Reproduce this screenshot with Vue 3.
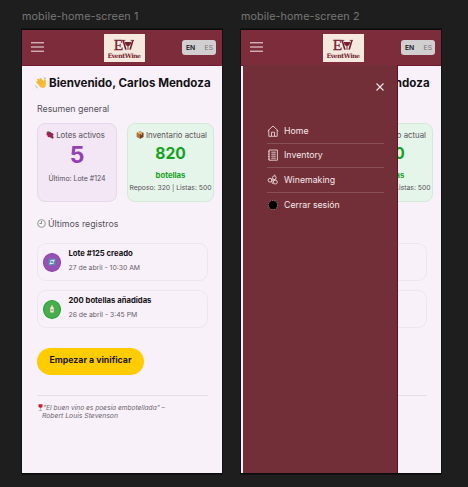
<script setup>
const screens = [
  { name: 'mobile-home-screen 1', menu: false },
  { name: 'mobile-home-screen 2', menu: true },
]
const records = [
  { title: 'Lote #125 creado', date: '27 de abril - 10:30 AM', kind: 'lot' },
  { title: '200 botellas añadidas', date: '26 de abril - 3:45 PM', kind: 'bottle' },
]
const links = [
  { label: 'Home', icon: 'home' },
  { label: 'Inventory', icon: 'list' },
  { label: 'Winemaking', icon: 'grape' },
  { label: 'Cerrar sesión', icon: 'dot' },
]
</script>

<template>
  <main class="board">
    <section v-for="s in screens" :key="s.name" class="frame">
      <div class="frame-name">{{ s.name }}</div>
      <div class="phone">
        <header class="bar">
          <svg class="burger" viewBox="0 0 13 10"><path d="M0 .8H13M0 5H13M0 9.2H13" stroke="#f6e9ec" stroke-width="1" /></svg>
          <div class="logo">
            <div class="mark">
              <span>E</span>
              <svg viewBox="0 0 13 12">
                <path d="M0 1H3.6M9.4 1H13" stroke="#741f2f" stroke-width=".9" />
                <path d="M1.2 1L4.2 11M11.8 1L8.8 11" stroke="#741f2f" stroke-width="1.8" fill="none" />
                <path d="M3.2 2.8H9.8Q9.8 6.7 7 7.1V10.2L8 11H5L6 10.2V7.1Q3.2 6.7 3.2 2.8Z" fill="#741f2f" />
              </svg>
            </div>
            <div class="brand">EventWine</div>
          </div>
          <div class="lang"><b>EN</b><span>ES</span></div>
        </header>

        <div class="content">
          <h1>
            <svg class="wave" viewBox="0 0 12 12">
              <g stroke="#f5b82e" stroke-width="1.9" stroke-linecap="round">
                <path d="M2.2 5L6 9M3 2.7L7.5 7.5M5.3 1.9L9 6M9.8 3.2L9.7 7" />
              </g>
              <path d="M4 6.5L8.5 4.2L10.6 5.5Q11.5 10.5 8 11Q5.8 11 4 8.5Z" fill="#f8bd34" />
              <path d="M3.1 4.1L5.8 7M4.5 2.7L7.3 5.6" stroke="#d28a20" stroke-width=".45" />
              <path d="M.5 8.5Q1 10.5 2.8 11M8.8.6Q10.4.8 10.9 2" stroke="#8b8793" stroke-width=".6" fill="none" />
            </svg>
            <span>Bienvenido, Carlos Mendoza</span>
          </h1>
          <h2 class="summary">Resumen general</h2>
          <div class="cards">
            <article class="card lots">
              <p class="label">
                <svg viewBox="0 0 9 9">
                  <path d="M.5 1Q4-1 5.4 2.2L2 3.5Z" fill="#45733a" />
                  <g fill="#9b2355"><circle cx="2.2" cy="3.4" r="1.7" /><circle cx="4.6" cy="2.8" r="1.7" /><circle cx="6.7" cy="4" r="1.7" /><circle cx="3.5" cy="5.3" r="1.8" /><circle cx="6" cy="6" r="1.8" /><circle cx="7.3" cy="7.3" r="1.3" /></g>
                </svg>
                <span>Lotes activos</span>
              </p>
              <strong>5</strong>
              <small>Último: Lote #124</small>
            </article>
            <article class="card stock">
              <p class="label">
                <svg viewBox="0 0 9 9">
                  <path d="M.7 2L4.5.4L8.3 2V6.8L4.5 8.7L.7 6.8Z" fill="#ad713d" />
                  <path d="M.7 2L4.5 3.7L8.3 2L4.5.4Z" fill="#d9a366" />
                  <path d="M4.5 3.7V8.7L8.3 6.8V2Z" fill="#75431f" />
                  <path d="M2.3 1.3L6.2 3V4.6" stroke="#f0cf98" stroke-width=".8" fill="none" />
                </svg>
                <span>Inventario actual</span>
              </p>
              <strong>820</strong>
              <em>botellas</em>
              <small>Reposo: 320 | Listas: 500</small>
            </article>
          </div>
          <h2 class="latest">
            <svg viewBox="0 0 10 10"><circle cx="5" cy="5" r="4.2" fill="#f5f5f4" stroke="#a09fa3" stroke-width="1.2" /><path d="M5 2.2V5H2.8" stroke="#4c4b50" stroke-width=".7" fill="none" /></svg>
            <span>Últimos registros</span>
          </h2>
          <article v-for="r in records" :key="r.title" class="record">
            <div class="badge" :class="r.kind">
              <svg v-if="r.kind === 'lot'" viewBox="0 0 8 8"><rect x=".5" y=".5" width="7" height="7" rx="1" fill="#548eae" /><path d="M2 3.2Q4 1.2 6 3M6 4.8Q4 6.6 2 5M6 1.5V3.2H4.5M2 6.4V4.9H3.5" stroke="#fff" stroke-width=".8" fill="none" /></svg>
              <svg v-else viewBox="0 0 8 8"><path d="M3.2.4H4.8V1.7L5.7 2.6V7.4H2.3V2.6L3.2 1.7Z" fill="#f5e9d7" /><path d="M3.2.4H4.8V1.5H3.2Z" fill="#d8b46b" /><path d="M3.1 4.1H4.9V6H3.1Z" fill="#d9a198" /></svg>
            </div>
            <div class="record-text">
              <b>{{ r.title }}</b>
              <span>{{ r.date }}</span>
            </div>
          </article>
          <button type="button">Empezar a vinificar</button>
          <footer>
            <svg viewBox="0 0 5 7"><path d="M.5.2H4.5V2.7Q4 3.8 2.5 3.9Q1 3.8.5 2.7Z" fill="#c91f2e" /><path d="M2.5 3.8V6.3M.8 6.5H4.2" stroke="#a5a0a6" stroke-width=".7" /></svg>
            <q><span class="line-a">"El buen vino es poesía embotellada" –</span><span class="line-b">Robert Louis Stevenson</span></q>
          </footer>
        </div>

        <nav v-if="s.menu" class="drawer">
          <svg class="close" viewBox="0 0 8 8"><path d="M.5.5L7.5 7.5M7.5.5L.5 7.5" stroke="#f5e8eb" stroke-width="1.1" /></svg>
          <ul>
            <li v-for="l in links" :key="l.label">
              <svg viewBox="0 0 12 12" fill="none" stroke="#f0dfe2" stroke-width=".85">
                <path v-if="l.icon === 'home'" d="M.7 6L6 1L11.3 6M1.8 5V11.3H10.2V5M4.5 11V7.2H7.5V11" />
                <path v-else-if="l.icon === 'list'" d="M2 1H10.4V11.2H2ZM1 2.8H2.5M1 5.2H2.5M1 7.6H2.5M1 10H2.5M4.3 3.2H8.8M4.3 5.2H8.8M4.3 7.2H8.8M4.3 9.2H8.8" />
                <g v-else-if="l.icon === 'grape'"><circle cx="3" cy="6.2" r="1.9" /><circle cx="7.3" cy="3.7" r="1.8" /><circle cx="8.3" cy="8" r="2" /><path d="M4.9 4.6V7.8Q4.9 9.8 6.4 9.6M4.9 6.1H8.6M7.8 1.9V.6" /></g>
                <circle v-else cx="6" cy="6" r="4.6" fill="#000" stroke="#b7999d" stroke-width=".7" stroke-dasharray="1.5 1" />
              </svg>
              <span>{{ l.label }}</span>
            </li>
          </ul>
        </nav>
      </div>
    </section>
  </main>
</template>

<style>
body { background: #1e1e1e; }
</style>

<style scoped>
* { box-sizing: border-box; margin: 0; padding: 0; }
svg { display: block; flex: none; }
.board { display: flex; gap: 19px; width: 468px; height: 487px; padding-left: 22px; background: #1e1e1e; overflow: hidden; font-family: Inter, "Liberation Sans", sans-serif; white-space: nowrap; }
.frame { width: 200px; }
.frame-name { height: 29px; padding-top: 10px; line-height: 14px; font-size: 10.8px; letter-spacing: .08px; color: #777; }
.phone { position: relative; width: 200px; height: 445px; background: #f9f1f9; border: 1px solid #0d0b0c; border-width: 1px 0; box-shadow: 0 0 0 1px #111214; }
.bar { display: flex; align-items: center; justify-content: space-between; height: 36px; padding: 0 6px 0 9px; background: #7d2c3b; border-bottom: 1px solid #721a31; }
.burger { width: 13px; height: 10px; margin: 0 22px 2px 0; }
.logo { width: 41px; height: 28px; padding-top: 4px; background: #f4e8df; color: #741f2f; font-family: "Liberation Serif", serif; text-align: center; }
.mark { display: flex; justify-content: center; height: 13px; font-size: 15.5px; line-height: 14px; -webkit-text-stroke: .3px #741f2f; }
.mark svg { width: 12px; height: 12px; margin: 1px 0 0 -1px; }
.brand { font: bold 6.2px/9px "DejaVu Serif", serif; letter-spacing: -.45px; }
.lang { display: flex; align-items: center; justify-content: space-between; width: 34px; height: 15px; padding: 0 3px 0 4px; border-radius: 3px; background: #d2cfd1; font-size: 6.8px; color: #777579; }
.lang b { color: #161616; font-weight: 600; }
.content { padding: 8px 8px 0 15px; }
h1 { display: flex; align-items: center; height: 18px; margin-left: -2.5px; font-size: 11.6px; font-weight: 700; color: #141216; }
.wave { width: 12px; height: 12px; margin-right: 2.5px; }
h2 { font-size: 8.8px; font-weight: 400; color: #55515a; }
.summary { height: 12px; margin-top: 11px; line-height: 12px; }
.cards { display: flex; gap: 10px; margin-top: 7.5px; }
.card { width: 80px; height: 79px; padding-top: 6px; border: 1px solid #e6d8ea; border-radius: 8px; background: #f3e6f5; text-align: center; color: #565159; }
.card.stock { width: 87px; border-color: #d3ead7; background: #e6f5e9; }
.label { display: flex; justify-content: center; align-items: center; gap: 2px; height: 11px; font-size: 7.8px; }
.lots .label { padding-right: 3px; }
.stock .label { padding-left: 2px; }
.label svg { width: 8px; height: 8px; }
.card strong { display: block; }
.card small { display: block; font-size: 6.8px; line-height: 9px; }
.lots strong { height: 28px; font-size: 23px; line-height: 29px; color: #9141b3; }
.lots small { margin-top: 5px; font-size: 6.95px; }
.stock strong { height: 26px; font-size: 15.6px; line-height: 26px; color: #14a321; }
.stock em { display: block; height: 16px; font-size: 7.7px; line-height: 17px; font-weight: 700; font-style: normal; color: #14a321; }
.latest { display: flex; align-items: center; gap: 2px; height: 12px; margin: 16px 0 13px; }
.latest svg { width: 9px; height: 9px; }
.record { display: flex; width: 171px; height: 38px; margin-bottom: 9px; padding-left: 5px; border: 1px solid #efe5ef; border-radius: 9px; }
.badge { display: flex; justify-content: center; width: 18px; height: 19px; margin: 9px 8px 0 0; padding-top: 4px; border-radius: 50%; background: #9751b4; border: 1px solid #8d3eae; }
.badge.bottle { background: #47ad4f; border-color: #1fa12c; }
.badge svg { width: 8px; height: 8px; }
.record-text { padding-top: 4px; margin-left: -.5px; }
.record-text b, .record-text span { display: block; }
.record-text b { height: 12px; font-size: 7.7px; line-height: 12px; color: #121014; }
.record-text span { margin-top: 2px; font-size: 6.85px; line-height: 12px; color: #656069; }
button { display: block; width: 107px; height: 27px; margin-top: 20px; border: 0; border-radius: 14px; background: #fc0; color: #1d1830; font: bold 8.75px/25px Inter, sans-serif; padding-bottom: 2px; }
footer { display: flex; width: 171px; margin-top: 20px; padding-top: 8px; border-top: 1px solid #e7dfe8; font-size: 6.6px; color: #6b656e; font-style: italic; }
footer svg { width: 5px; height: 7px; margin-left: 1px; }
q { quotes: none; }
q span { display: block; line-height: 8.4px; }
q .line-b { margin-left: -1px; font-size: 6.8px; }
.drawer { position: absolute; left: 2px; top: 35px; width: 155px; height: 408px; background: #722f37; border-right: 1px solid #650f28; }
.close { width: 8px; height: 8px; margin: 18px 0 0 132.5px; }
ul { width: 117px; margin: 28px 0 0 24px; list-style: none; }
li { display: flex; align-items: center; gap: 5px; height: 24.5px; border-bottom: 1px solid #87515a; color: #f5e8eb; font-size: 8.75px; }
li:last-child { border: 0; }
li svg { width: 12px; height: 12px; }
</style>
